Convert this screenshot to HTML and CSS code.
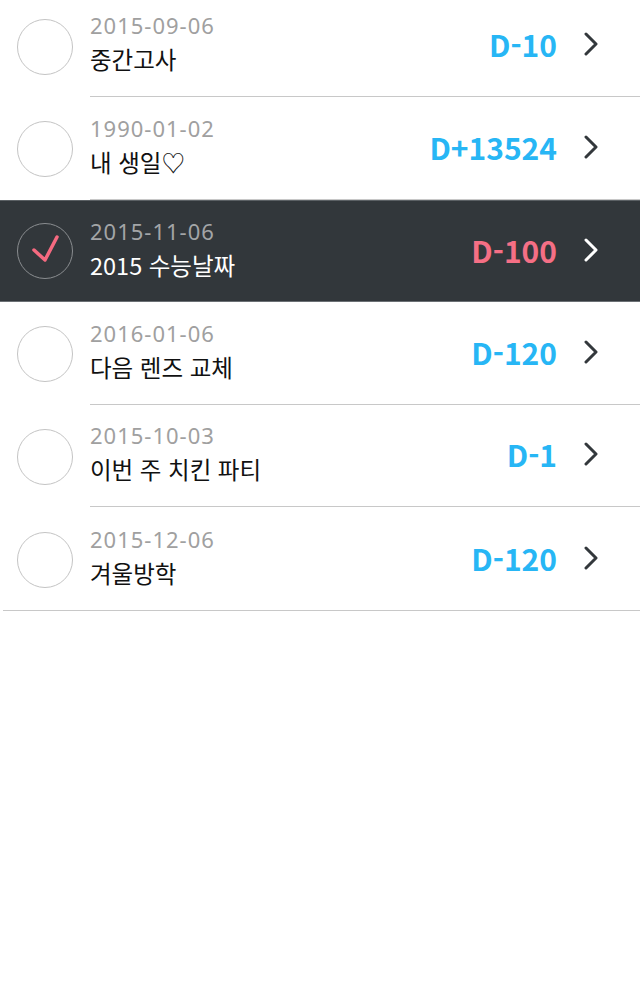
FILE: index.html
```html
<!DOCTYPE html>
<html lang="ko">
<head>
<meta charset="utf-8">
<title>D-Day</title>
<link rel="stylesheet" href="styles.css">
</head>
<body>
<ul class="list">
  <li class="row first">
    <span class="check"></span>
    <div class="body">
      <div class="text"><div class="date">2015-09-06</div><div class="title">중간고사</div></div>
      <div class="dday">D-10</div>
      <svg class="chev" viewBox="0 0 14 24" width="14" height="24"><path d="M2 2 L12 12 L2 22"/></svg>
    </div>
  </li>
  <li class="row">
    <span class="check"></span>
    <div class="body">
      <div class="text"><div class="date">1990-01-02</div><div class="title">내 생일♡</div></div>
      <div class="dday">D+13524</div>
      <svg class="chev" viewBox="0 0 14 24" width="14" height="24"><path d="M2 2 L12 12 L2 22"/></svg>
    </div>
  </li>
  <li class="row selected">
    <span class="check"><svg viewBox="0 0 56 56" width="56" height="56"><path d="M17 27 L28 37 L40 14"/></svg></span>
    <div class="body">
      <div class="text"><div class="date">2015-11-06</div><div class="title">2015 수능날짜</div></div>
      <div class="dday">D-100</div>
      <svg class="chev" viewBox="0 0 14 24" width="14" height="24"><path d="M2 2 L12 12 L2 22"/></svg>
    </div>
  </li>
  <li class="row">
    <span class="check"></span>
    <div class="body">
      <div class="text"><div class="date">2016-01-06</div><div class="title">다음 렌즈 교체</div></div>
      <div class="dday">D-120</div>
      <svg class="chev" viewBox="0 0 14 24" width="14" height="24"><path d="M2 2 L12 12 L2 22"/></svg>
    </div>
  </li>
  <li class="row">
    <span class="check"></span>
    <div class="body">
      <div class="text"><div class="date">2015-10-03</div><div class="title">이번 주 치킨 파티</div></div>
      <div class="dday">D-1</div>
      <svg class="chev" viewBox="0 0 14 24" width="14" height="24"><path d="M2 2 L12 12 L2 22"/></svg>
    </div>
  </li>
  <li class="row last">
    <span class="check"></span>
    <div class="body">
      <div class="text"><div class="date">2015-12-06</div><div class="title">겨울방학</div></div>
      <div class="dday">D-120</div>
      <svg class="chev" viewBox="0 0 14 24" width="14" height="24"><path d="M2 2 L12 12 L2 22"/></svg>
    </div>
  </li>
</ul>
</body>
</html>
```

FILE: styles.css
```css
html, body {
  margin: 0;
  padding: 0;
  background: #fff;
}
body {
  font-family: "Noto Sans CJK KR", "Noto Sans", sans-serif;
  overflow: hidden;
}
.list {
  list-style: none;
  margin: -5.7px 0 0 0;
  padding: 0;
}
.list::after {
  content: "";
  display: block;
  margin-left: 3px;
  border-top: 1px solid #c8c8c8;
}
.row {
  display: flex;
  align-items: stretch;
  height: 102.6px;
  box-sizing: border-box;
}
.check {
  flex: none;
  align-self: center;
  width: 56px;
  height: 56px;
  box-sizing: border-box;
  border: 1px solid #c4c4c4;
  border-radius: 50%;
  margin: 2px 17px 0 17px;
  display: flex;
}
.row.selected .check {
  margin-top: 0;
}
.check svg {
  margin: -1px;
}
.check path {
  fill: none;
  stroke: #f56a80;
  stroke-width: 3.5;
  stroke-linecap: round;
  stroke-linejoin: round;
}
.body {
  flex: 1;
  display: flex;
  align-items: center;
  border-bottom: 1px solid #c8c8c8;
  padding-right: 42px;
}
.row.last .body {
  border-bottom: none;
}
.text {
  flex: 1;
  display: flex;
  flex-direction: column;
  margin-top: -2px;
}
.date {
  font-family: "Noto Sans", "Noto Sans CJK KR", sans-serif;
  font-size: 22px;
  letter-spacing: 1px;
  line-height: 30px;
  color: #a0a0a0;
}
.title {
  font-size: 23.5px;
  line-height: 38px;
  color: #111;
}
.dday {
  font-size: 30px;
  font-weight: 700;
  color: #27b6f5;
  margin-right: 27px;
  margin-top: -2px;
}
.chev {
  margin-top: -2px;
}
.chev path {
  fill: none;
  stroke: #33383c;
  stroke-width: 3;
  stroke-linecap: round;
  stroke-linejoin: round;
}
.row.selected {
  background: #32373b;
  border-top: 1px solid #5b6064;
  border-bottom: 1px solid #6b7074;
}
.row.selected .body {
  border-bottom: none;
}
.row.selected .check {
  border-color: #8a8d90;
}
.row.selected .date {
  color: #a3a5a7;
}
.row.selected .title {
  color: #fff;
}
.row.selected .dday {
  color: #f56f85;
}
.row.selected .chev path {
  stroke: #fff;
}
```
